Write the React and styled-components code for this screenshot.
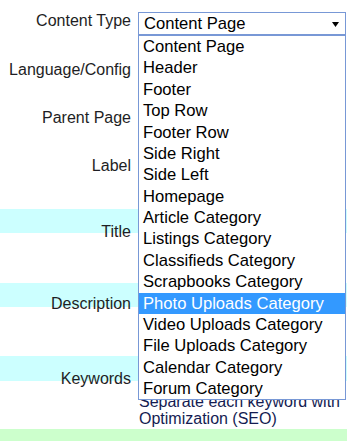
import React from "react";
import styled, { createGlobalStyle } from "styled-components";

const GlobalStyle = createGlobalStyle`
  html, body {
    margin: 0;
    padding: 0;
    overflow: hidden;
    background: #ffffff;
  }
  body {
    font-family: "Liberation Sans", Arial, sans-serif;
    font-size: 16px;
    color: #222;
  }
`;

const Form = styled.div`
  display: flex;
  flex-direction: column;
  width: 347px;
`;

const Row = styled.div`
  display: grid;
  grid-template-columns: 131px 1fr;
  column-gap: 7px;
  height: ${(p) => p.$h}px;
  background: ${(p) =>
    p.$band
      ? `linear-gradient(#ccffff 0 ${p.$band}px, #ffffff ${p.$band}px)`
      : "#ffffff"};
`;

const Label = styled.div`
  text-align: right;
  white-space: nowrap;
  line-height: 18px;
  padding-top: ${(p) => p.$top}px;
  color: #1e1e24;
`;

const Field = styled.div`
  position: relative;
  padding-top: ${(p) => p.$top || 0}px;
  min-width: 0;
`;

const Combo = styled.div`
  box-sizing: border-box;
  width: 208px;
  height: 23px;
  border: 1px solid #7898d6;
  background: #fff;
  display: flex;
  align-items: center;
  justify-content: space-between;
  padding: 0 6px 0 5px;
  font-size: 16.6px;
  color: #000;
  line-height: 21px;
`;

const Arrow = styled.svg`
  width: 7px;
  height: 5px;
  flex: none;
  margin-top: 1px;
`;

const List = styled.ul`
  position: absolute;
  left: 0;
  top: 35px;
  z-index: 10;
  box-sizing: border-box;
  width: 208px;
  margin: 0;
  padding: 0;
  list-style: none;
  border: 1px solid #7898d6;
  background: #fff;
`;

const Option = styled.li`
  height: 21.375px;
  line-height: 21.375px;
  padding-left: 4px;
  font-size: 16.6px;
  white-space: nowrap;
  color: ${(p) => (p.$active ? "#ffffff" : "#000000")};
  background: ${(p) => (p.$active ? "#3399ff" : "transparent")};
`;

const TextInput = styled.div`
  box-sizing: border-box;
  width: 200px;
  height: 22px;
  border: 1px solid #a9a9a9;
  background: #fff;
`;

const Hint = styled.div`
  margin-top: ${(p) => p.$top}px;
  margin-left: 1px;
  line-height: 17px;
  white-space: nowrap;
  color: #141c52;
`;

const GreenBand = styled.div`
  height: 20px;
  background: #ccffcc;
`;

const options = [
  "Content Page",
  "Header",
  "Footer",
  "Top Row",
  "Footer Row",
  "Side Right",
  "Side Left",
  "Homepage",
  "Article Category",
  "Listings Category",
  "Classifieds Category",
  "Scrapbooks Category",
  "Photo Uploads Category",
  "Video Uploads Category",
  "File Uploads Category",
  "Calendar Category",
  "Forum Category",
];

export default function App() {
  return (
    <>
      <GlobalStyle />
      <Form>
        <Row $h={60}>
          <Label $top={11.5}>Content Type</Label>
          <Field $top={12}>
            <Combo>
              <span>Content Page</span>
              <Arrow viewBox="0 0 7 5">
                <path d="M0 0 H7 L3.5 5 Z" fill="#000" />
              </Arrow>
            </Combo>
            <List>
              {options.map((o) => (
                <Option key={o} $active={o === "Photo Uploads Category"}>
                  {o}
                </Option>
              ))}
            </List>
          </Field>
        </Row>
        <Row $h={48}>
          <Label $top={0.5}>Language/Config</Label>
          <Field>
            <TextInput />
          </Field>
        </Row>
        <Row $h={49}>
          <Label $top={0.5}>Parent Page</Label>
          <Field>
            <TextInput />
          </Field>
        </Row>
        <Row $h={52}>
          <Label $top={0}>Label</Label>
          <Field>
            <TextInput />
          </Field>
        </Row>
        <Row $h={74} $band={24}>
          <Label $top={14}>Title</Label>
          <Field $top={12}>
            <TextInput />
          </Field>
        </Row>
        <Row $h={73} $band={24}>
          <Label $top={12}>Description</Label>
          <Field $top={12}>
            <TextInput />
          </Field>
        </Row>
        <Row $h={73} $band={25}>
          <Label $top={14}>Keywords</Label>
          <Field $top={12}>
            <TextInput />
            <Hint $top={3}>
              Separate each keyword with
              <br />
              Optimization (SEO)
            </Hint>
          </Field>
        </Row>
        <GreenBand />
      </Form>
    </>
  );
}
